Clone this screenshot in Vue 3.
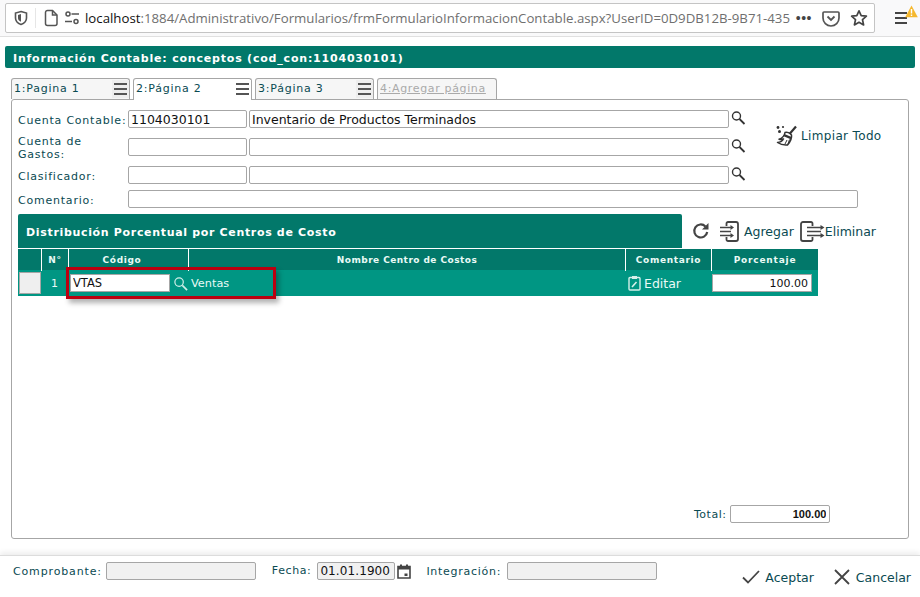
<script setup>
const tabs = [
  { label: '1:Pagina 1', menu: true },
  { label: '2:Página 2', menu: true, active: true },
  { label: '3:Página 3', menu: true },
  { label: '4:Agregar página', add: true }
]
const rows = [
  { label: 'Cuenta Contable:', code: '1104030101', name: 'Inventario de Productos Terminados' },
  { label: 'Cuenta de Gastos:', code: '', name: '' },
  { label: 'Clasificador:', code: '', name: '' }
]
</script>

<template>
  <div class="page">
    <header class="browser">
      <div class="urlbar">
        <svg class="ic shield" width="16" height="16" viewBox="0 0 16 16"><path d="M8 1.500 13.500 3v5c0 3.200-2.400 5.400-5.500 6.500C4.900 13.400 2.500 11.200 2.500 8V3Z" fill="none" stroke="#555" stroke-width="1.600"/><path d="M8 4v7.800C6 11 5 9.700 5 8V5Z" fill="#555"/></svg>
        <span class="sep"></span>
        <svg class="ic" width="16" height="18" viewBox="0 0 16 18"><path d="M2.500 3.500a2 2 0 0 1 2-2H9.500L14 6v8.500a2 2 0 0 1-2 2H4.500a2 2 0 0 1-2-2Z" fill="none" stroke="#555" stroke-width="1.500"/><path d="M9.500 1.500V6H14" fill="none" stroke="#555" stroke-width="1.500"/></svg>
        <svg class="ic perm" width="16" height="16" viewBox="0 0 16 16"><circle cx="4" cy="4" r="2" fill="none" stroke="#555" stroke-width="1.500"/><path d="M7.500 4H15M1 11.500H8" stroke="#555" stroke-width="1.500" fill="none"/><circle cx="12" cy="11.500" r="2" fill="none" stroke="#555" stroke-width="1.500"/></svg>
        <div class="url"><span class="host">localhost</span>:1884/Administrativo/Formularios/frmFormularioInformacionContable.aspx?UserID=0D9DB12B-9B71-435</div>
        <span class="dots">•••</span>
        <svg class="ic" width="18" height="18" viewBox="0 0 18 18"><path d="M2 3h14a1 1 0 0 1 1 1v5a8 8 0 0 1-16 0V4a1 1 0 0 1 1-1Z" fill="none" stroke="#555" stroke-width="1.700"/><path d="M5.500 7.500 9 11l3.500-3.500" fill="none" stroke="#555" stroke-width="1.800"/></svg>
        <svg class="ic star" width="18" height="18" viewBox="0 0 18 18"><path d="M9 1.800 11.200 6.600 16.400 7.200 12.500 10.700 13.600 15.900 9 13.300 4.400 15.900 5.500 10.700 1.600 7.200 6.800 6.600Z" fill="none" stroke="#444" stroke-width="1.700" stroke-linejoin="round"/></svg>
      </div>
      <div class="burger">
        <span></span><span></span><span></span>
        <svg class="warn" width="13" height="13" viewBox="0 0 13 13"><path d="M6.500.5 12.800 12.300H.2Z" fill="#f5b82e"/><path d="M6.500 4v4.500M6.500 9.600v1.400" stroke="#fff" stroke-width="1.400"/></svg>
      </div>
    </header>

    <main class="content">
      <h1 class="title">Información Contable: conceptos (cod_con:1104030101)</h1>

      <nav class="tabs">
        <div v-for="t in tabs" :key="t.label" class="tab" :class="{ active: t.active, add: t.add }">
          <span class="tablabel">{{ t.label }}</span>
          <span v-if="t.menu" class="tabmenu"><i></i><i></i><i></i></span>
        </div>
      </nav>

      <section class="panel">
        <div class="upper">
          <div class="form">
            <template v-for="r in rows" :key="r.label">
              <label class="lbl">{{ r.label }}</label>
              <input class="inp" :value="r.code" readonly />
              <input class="inp" :value="r.name" readonly />
              <svg class="search" width="16" height="16" viewBox="0 0 16 16"><circle cx="6.500" cy="6" r="4" fill="none" stroke="#333" stroke-width="1.400"/><path d="M9.500 9l5 5" stroke="#333" stroke-width="1.800"/></svg>
            </template>
            <label class="lbl">Comentario:</label>
            <input class="inp comment" readonly />
          </div>
          <div class="clear">
            <svg width="22" height="22" viewBox="0 0 22 22"><path d="M20 1.500 13.500 9" stroke="#333" stroke-width="2.200" fill="none"/><path d="M9 7.500c2-1 5 .5 6.500 2.500 .5 3-1.500 7-4 10-3 .3-7-.5-10-2.500 3-.3 5-1.500 6-3.500-1.500.7-3 .7-4.500.3C6.500 13 8.500 10.500 9 7.500Z" fill="#fff" stroke="#333" stroke-width="1.500" stroke-linejoin="round"/><path d="M8.500 9l7 3-.7 2.200-7.800-3.200Z" fill="#333"/><path d="M11 15l-2 4M13.500 14.500 12 19" stroke="#333" stroke-width="1"/><circle cx="2" cy="2.500" r="1.400" fill="#333"/><circle cx="7" cy="2" r="1.100" fill="#333"/><circle cx="3.500" cy="6.500" r="1.500" fill="#333"/></svg>
            <span>Limpiar Todo</span>
          </div>
        </div>

        <div class="dist">
          <h2 class="subtitle">Distribución Porcentual por Centros de Costo</h2>
          <svg class="refresh" width="20" height="20" viewBox="0 0 20 20"><path d="M16.200 11a6.500 6.500 0 1 1-1.800-5.600" fill="none" stroke="#444" stroke-width="2.200"/><path d="M17.500 2v6.500H11Z" fill="#444"/></svg>
          <svg class="act-ic" width="19" height="21" viewBox="0 0 19 21"><path d="M6.500 5V2.500a1.500 1.500 0 0 1 1.500-1.500h8a2 2 0 0 1 2 2v15a2 2 0 0 1-2 2H8a1.500 1.500 0 0 1-1.500-1.500V16" fill="none" stroke="#444" stroke-width="1.800"/><path d="M0 6.500h11M0 10.500h11M0 14.500h11" stroke="#444" stroke-width="1.500"/><path d="M10.500 4l3.500 2.500-3.500 2.500ZM10.500 12l3.500 2.500-3.500 2.500Z" fill="#444"/></svg>
          <span class="act">Agregar</span>
          <svg class="act-ic out" width="25" height="21" viewBox="0 0 25 21"><path d="M12.500 5V2.500a1.500 1.500 0 0 0-1.500-1.500H3a2 2 0 0 0-2 2v15a2 2 0 0 0 2 2h8a1.500 1.500 0 0 0 1.500-1.500V16" fill="none" stroke="#444" stroke-width="1.800"/><path d="M7 6.500h14M7 10.500h14M7 14.500h14" stroke="#444" stroke-width="1.500"/><path d="M20.500 4l4 2.500-4 2.500ZM20.500 12l4 2.500-4 2.500Z" fill="#444"/></svg>
          <span class="act">Eliminar</span>
        </div>

        <div class="table">
          <div class="thead">
            <div class="th"></div>
            <div class="th">N°</div>
            <div class="th th-code">Código</div>
            <div class="th th-name">Nombre Centro de Costos</div>
            <div class="th">Comentario</div>
            <div class="th th-pct">Porcentaje</div>
          </div>
          <div class="tr">
            <div class="td"><span class="selector"></span></div>
            <div class="td num">1</div>
            <div class="td code">
              <input class="cell-inp" value="VTAS" readonly />
              <svg width="15" height="15" viewBox="0 0 16 16"><circle cx="6.500" cy="6.500" r="4.500" fill="none" stroke="#cfeee8" stroke-width="1.300"/><path d="M10 10l5 5" stroke="#cfeee8" stroke-width="1.800"/></svg>
              <span class="ventas">Ventas</span>
            </div>
            <div class="td"></div>
            <div class="td edit">
              <svg width="13" height="16" viewBox="0 0 13 16"><rect x="1" y="2.500" width="11" height="12.500" rx="1" fill="none" stroke="#d5f0ea" stroke-width="1.400"/><path d="M4 1h5v3H4Z" fill="#d5f0ea"/><path d="M4 12 8.500 7" stroke="#d5f0ea" stroke-width="1.600"/></svg>
              <span>Editar</span>
            </div>
            <div class="td pct"><input class="cell-inp right" value="100.00" readonly /></div>
          </div>
          <div class="highlight"></div>
        </div>

        <div class="total">
          <label>Total:</label>
          <input class="inp total-inp" value="100.00" readonly />
        </div>
      </section>
    </main>

    <footer class="footer">
      <label class="flbl">Comprobante:</label>
      <input class="inp ro comp" readonly />
      <label class="flbl fecha">Fecha:</label>
      <input class="inp ro date" value="01.01.1900" readonly />
      <svg class="cal" width="14" height="15" viewBox="0 0 14 15"><path d="M1 2.500h12V14H1Z" fill="none" stroke="#444" stroke-width="1.600"/><path d="M1 2h12v3.500H1ZM3 .5h2V3H3ZM9 .5h2V3H9ZM7.500 9.500H10.500V12H7.500Z" fill="#444"/></svg>
      <label class="flbl integ">Integración:</label>
      <input class="inp ro comp last" readonly />
      <div class="buttons">
        <svg width="18" height="14" viewBox="0 0 18 14"><path d="M1 7.500 6 12.500 17 1" fill="none" stroke="#444" stroke-width="1.800"/></svg>
        <span class="fbtn first">Aceptar</span>
        <svg class="x" width="16" height="16" viewBox="0 0 16 16"><path d="M1 1l14 14M15 1 1 15" stroke="#444" stroke-width="1.800"/></svg>
        <span class="fbtn">Cancelar</span>
      </div>
    </footer>
  </div>
</template>

<style>
html, body { margin: 0; background: #fff; }
</style>

<style scoped>
.page {
  width: 920px;
  height: 597px;
  display: flex;
  flex-direction: column;
  overflow: hidden;
  font-family: "DejaVu Sans", sans-serif;
  font-size: 11px;
  color: #0a4a52;
  background: #fff;
}
.browser {
  height: 37px;
  flex: none;
  box-sizing: border-box;
  background: #f9f9fa;
  border-bottom: 1px solid #e0e0e0;
  padding: 3px 0 0 5px;
  display: flex;
  align-items: flex-start;
}
.urlbar {
  width: 870px;
  height: 30px;
  box-sizing: border-box;
  background: #fff;
  border: 1px solid #c4c4c4;
  border-radius: 2px;
  display: flex;
  align-items: center;
  padding-left: 7px;
}
.ic { flex: none; }
.sep { width: 1px; height: 20px; background: #e6e6e6; margin: 0 7px 0 6px; }
.perm { margin-left: 5px; margin-right: 5px; }
.url {
  flex: 1;
  min-width: 0;
  white-space: nowrap;
  overflow: hidden;
  font-family: "Open Sans", sans-serif;
  font-size: 13.240px;
  color: #6f6f6f;
}
.host { color: #111; }
.dots { font-family: "Liberation Sans", sans-serif; color: #444; font-size: 14px; letter-spacing: .5px; margin: 0 10px 0 0; flex: none; }
.star { margin-left: 10px; margin-right: 6px; }
.burger {
  position: relative;
  width: 12px;
  margin: 9px 0 0 20px;
  display: flex;
  flex-direction: column;
  gap: 3px;
}
.burger span { height: 2px; background: #444; display: block; }
.warn { position: absolute; left: 10px; top: -7px; }
.content {
  flex: 1;
  min-height: 0;
  display: flex;
  flex-direction: column;
  padding: 9px 11px 16px;
}
.title {
  margin: 0 -6px 10px;
  height: 22px;
  line-height: 25px;
  padding-left: 8px;
  background: #02786a;
  color: #fff;
  font-size: 11px;
  font-weight: 700;
  letter-spacing: .8px;
  border-radius: 2px;
  flex: none;
}
.tabs { display: flex; gap: 3px; height: 21px; flex: none; position: relative; z-index: 1; }
.tab {
  width: 119px;
  box-sizing: border-box;
  height: 21px;
  border: 1px solid #a6a6a6;
  border-bottom: 0;
  border-radius: 3px 3px 0 0;
  background: #f6f6f6;
  display: flex;
  align-items: center;
  justify-content: space-between;
  padding: 0 0 1px 2px;
  letter-spacing: .78px;
  color: #0a4a52;
}
.tab.active { background: #fff; height: 22px; padding-bottom: 2px; }
.tab.add { width: 120px; color: #aaa; text-decoration: underline; letter-spacing: .65px; }
.tabmenu {
  width: 17px;
  height: 18px;
  box-sizing: border-box;
  padding: 3px 2px;
  background: #eee;
  display: flex;
  flex-direction: column;
  justify-content: space-between;
}
.active .tabmenu { background: #fff; }
.tabmenu i { display: block; height: 2px; background: #555; }
.panel {
  flex: 1;
  min-height: 0;
  border: 1px solid #a6a6a6;
  border-radius: 3px;
  padding: 10px 6px 15px;
  display: flex;
  flex-direction: column;
}
.upper { display: flex; }
.form {
  width: 740px;
  flex: none;
  display: grid;
  grid-template-columns: 110px 121px 482px 17px;
  row-gap: 6px;
  align-items: center;
}
.lbl { letter-spacing: .78px; line-height: 13px; padding-top: 1px; margin-bottom: -1px; }
.inp {
  box-sizing: border-box;
  height: 18px;
  border: 1px solid #a6a6a6;
  border-radius: 2px;
  background: #fff;
  padding: 0 2px;
  font-family: "DejaVu Sans", sans-serif;
  font-size: 12.500px;
  color: #111;
  outline: none;
  width: 100%;
}
.form .inp { width: calc(100% - 2px); }
.search { margin-top: -2px; margin-left: -1px; }
.form .comment { grid-column: 2 / 5; width: 730px; }
.clear {
  display: flex;
  align-items: center;
  gap: 3px;
  margin: 14px 0 0 18px;
  height: 24px;
  font-size: 12px;
  letter-spacing: .35px;
  white-space: nowrap;
}
.dist { display: flex; align-items: center; margin-top: 6px; height: 34px; }
.subtitle {
  width: 664px;
  flex: none;
  height: 34px;
  box-sizing: border-box;
  margin: 0;
  padding-left: 8px;
  line-height: 37px;
  background: #02786a;
  color: #fff;
  font-size: 11px;
  font-weight: 700;
  letter-spacing: .67px;
  border-radius: 2px 2px 0 0;
}
.refresh { margin-left: 9px; }
.act-ic { margin-left: 9px; flex: none; }
.act { font-size: 12.500px; margin-left: 5px; }
.act-ic.out { margin-left: 6px; }
.act-ic.out + .act { margin-left: 0; }
.table { width: 800px; position: relative; }
.thead, .tr {
  display: grid;
  grid-template-columns: 23px 27px 120px 437px 86px 107px;
}
.thead { height: 22px; background: #02786a; }
.th {
  border-top: 1px solid #fff;
  border-left: 1px solid #fff;
  text-align: center;
  line-height: 22px;
  color: #eafaf6;
  font-size: 9px;
  font-weight: 700;
  letter-spacing: .65px;
}
.th:first-child { border-left: 0; }
.th-code { padding-right: 13px; }
.th-name { letter-spacing: .45px; }
.th-pct { letter-spacing: .8px; }
.tr { height: 26px; background: #009683; }
.td { display: flex; align-items: center; color: #eafaf6; }
.selector {
  display: block;
  box-sizing: border-box;
  width: 22px;
  height: 22px;
  margin-left: 1px;
  background: #efefef;
  border: 1px solid #a6a6a6;
}
.num { justify-content: center; }
.code { padding-left: 2px; }
.code svg { margin-left: 3px; flex: none; }
.ventas { margin-left: 3px; font-size: 11.300px; white-space: nowrap; }
.cell-inp {
  box-sizing: border-box;
  width: 100px;
  height: 18px;
  flex: none;
  border: 1px solid #a6a6a6;
  background: #fff;
  padding: 0 2px;
  font-family: "DejaVu Sans", sans-serif;
  font-size: 11.500px;
  color: #111;
  outline: none;
}
.right { text-align: right; font-size: 11px; padding-right: 3px; }
.edit { padding-left: 3px; gap: 3px; font-size: 12.500px; }
.pct { padding-left: 1px; }
.highlight {
  position: absolute;
  left: 48px;
  top: 19px;
  width: 210px;
  height: 32px;
  box-sizing: border-box;
  border: 3px solid #bb0010;
  box-shadow: 3px 4px 5px rgba(0, 0, 0, .3);
}
.total {
  margin-top: auto;
  margin-left: 676px;
  width: 136px;
  display: flex;
  align-items: center;
  gap: 4px;
  letter-spacing: .5px;
}
.total label { flex: none; }
.total-inp {
  width: 100px;
  flex: none;
  text-align: right;
  font-family: "Liberation Sans", sans-serif;
  font-weight: 700;
  font-size: 11px;
  padding-right: 3px;
}
.footer {
  flex: none;
  height: 42px;
  box-sizing: border-box;
  display: flex;
  align-items: flex-start;
  padding: 6px 9px 0 13px;
  border-top: 1px solid #dcdcdc;
  box-shadow: 0 -3px 5px rgba(0, 0, 0, .07);
}
.flbl { letter-spacing: .85px; flex: none; line-height: 20px; }
.ro { background: #f1f1f1; flex: none; }
.comp { width: 150px; margin-left: 4px; }
.comp.last { margin-left: 6px; }
.fecha { margin-left: 16px; letter-spacing: .6px; line-height: 18px; }
.date { width: 78px; margin-left: 6px; padding: 0 2px; font-size: 12px; letter-spacing: .1px; }
.cal { margin: 2px 0 0 2px; flex: none; }
.integ { margin-left: 15px; letter-spacing: .72px; }
.buttons { margin: 7px 0 0 auto; display: flex; align-items: center; }
.fbtn { font-size: 12.500px; margin-left: 6px; }
.fbtn.first { margin-left: 5px; }
.x { margin-left: 20px; }
</style>
